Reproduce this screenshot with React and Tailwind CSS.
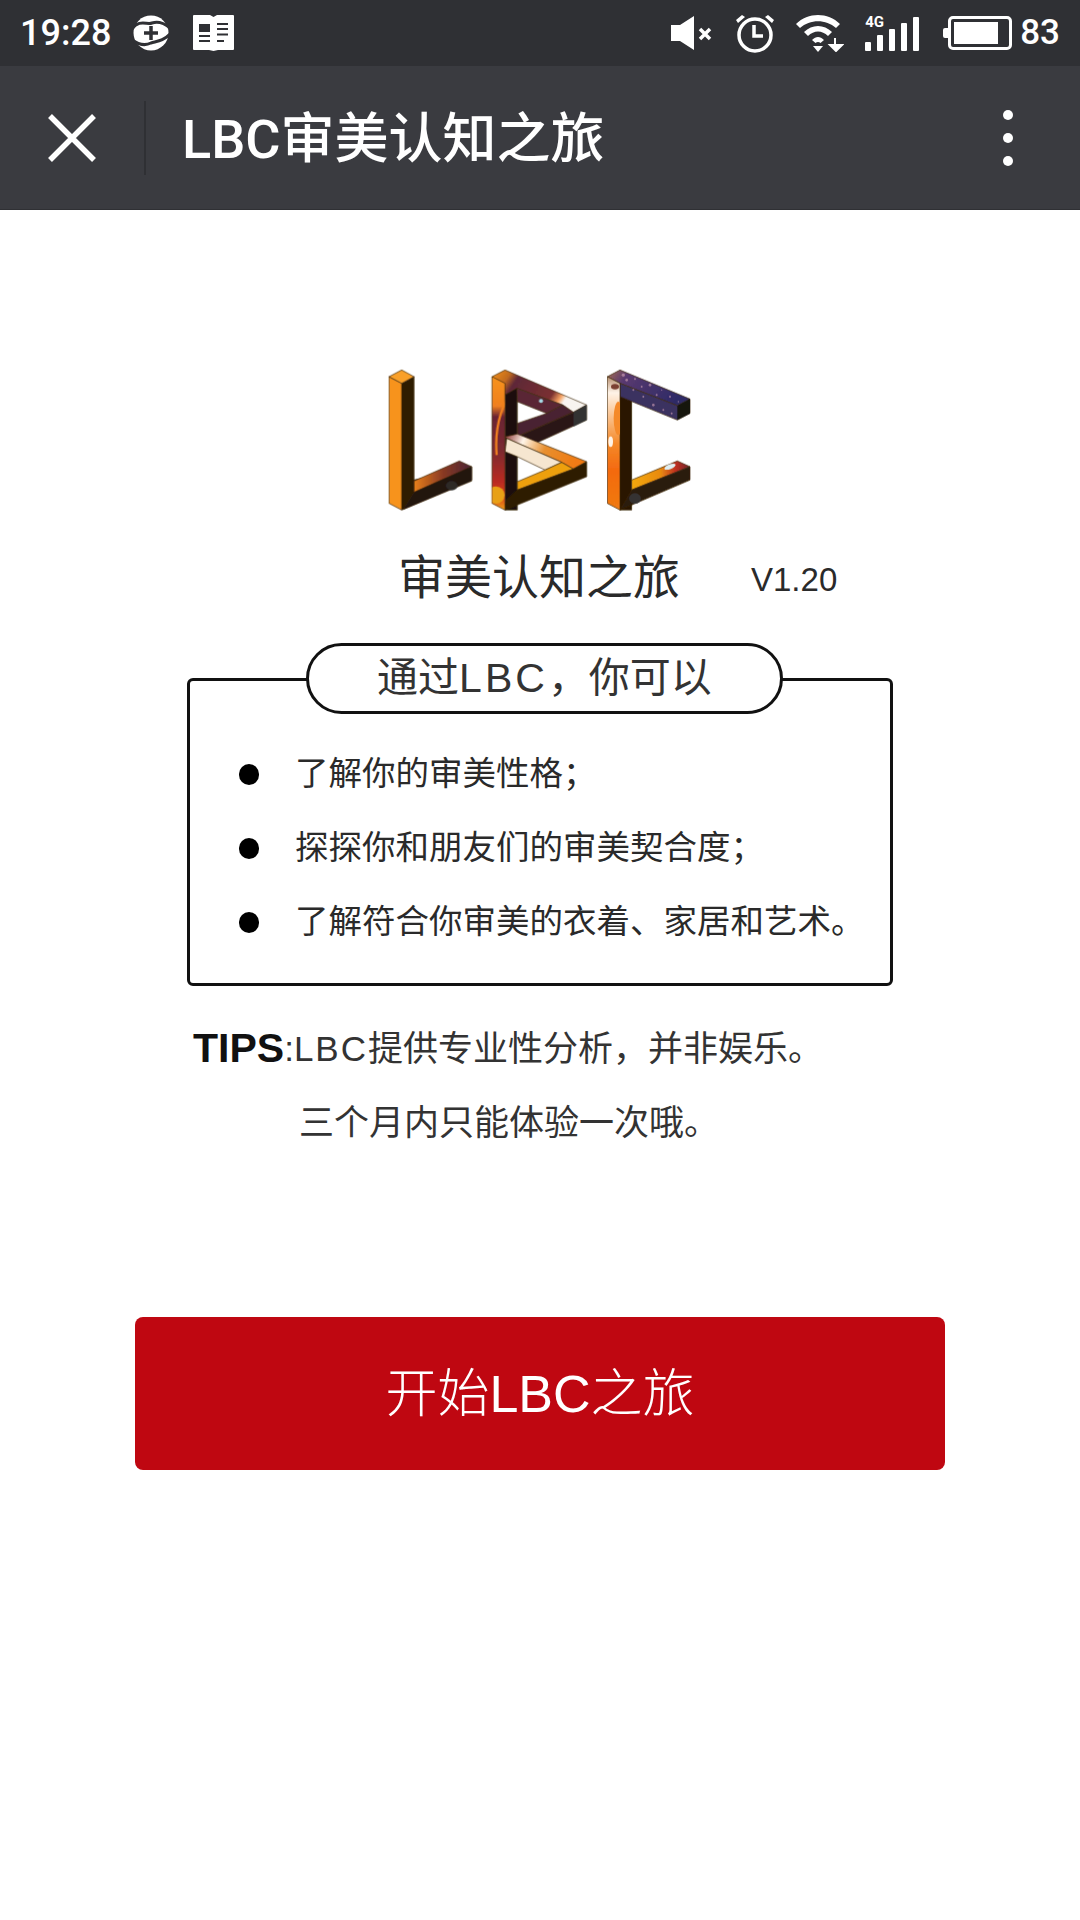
const cjk = { fontFamily: '"Liberation Sans", "Noto Sans CJK SC", sans-serif' }
const roboto = { fontFamily: 'Roboto, "Noto Sans CJK SC", sans-serif' }

// speckles for the galaxy texture on the C arm
const stars = [
  [770, 75, 4], [795, 72, 3], [815, 95, 3], [840, 90, 4], [860, 120, 3], [875, 105, 2], [900, 125, 3],
  [820, 125, 3], [850, 150, 4], [880, 165, 3], [905, 175, 3], [925, 140, 2], [790, 105, 3], [760, 60, 5],
]

// the picture logo, drawn in 3x coordinates of its 340x170 box
function Logo() {
  const edge = { stroke: '#3b2508', strokeWidth: 2, strokeLinejoin: 'round' }
  return (
    <svg width="340" height="170" viewBox="0 0 1020 510" className="self-center">
      <defs>
        <linearGradient id="bFront" x1="0" y1="0" x2="0" y2="1">
          <stop offset="0" stopColor="#f7931e" />
          <stop offset="0.22" stopColor="#f08020" />
          <stop offset="0.3" stopColor="#6a2433" />
          <stop offset="0.55" stopColor="#7a2a30" />
          <stop offset="0.78" stopColor="#b82a22" />
          <stop offset="0.9" stopColor="#d8401a" />
          <stop offset="1" stopColor="#f0a018" />
        </linearGradient>
        <linearGradient id="cFront" x1="0" y1="0" x2="0" y2="1">
          <stop offset="0" stopColor="#b89070" />
          <stop offset="0.12" stopColor="#fff4e8" />
          <stop offset="0.5" stopColor="#f58a2a" />
          <stop offset="0.7" stopColor="#f46a10" />
          <stop offset="1" stopColor="#f07a12" />
        </linearGradient>
        <linearGradient id="bTop" x1="0" y1="0" x2="1" y2="0.3">
          <stop offset="0" stopColor="#f7931e" />
          <stop offset="0.2" stopColor="#c06a20" />
          <stop offset="0.3" stopColor="#5e2838" />
          <stop offset="0.74" stopColor="#7a3030" />
          <stop offset="0.84" stopColor="#f4a060" />
          <stop offset="0.9" stopColor="#f8f4f0" />
          <stop offset="1" stopColor="#f8f4f0" />
        </linearGradient>
        <linearGradient id="cTop" x1="0" y1="0" x2="1" y2="0.3">
          <stop offset="0" stopColor="#a87050" />
          <stop offset="0.25" stopColor="#5a3a70" />
          <stop offset="1" stopColor="#2e2a66" />
        </linearGradient>
        <linearGradient id="lFoot" x1="0" y1="0" x2="1" y2="0">
          <stop offset="0" stopColor="#e8801c" />
          <stop offset="0.5" stopColor="#8a3a22" />
          <stop offset="1" stopColor="#4a2436" />
        </linearGradient>
        <linearGradient id="bLower" x1="0" y1="0" x2="1" y2="0.2">
          <stop offset="0" stopColor="#8a3030" />
          <stop offset="0.25" stopColor="#fff6ea" />
          <stop offset="0.55" stopColor="#e89030" />
          <stop offset="1" stopColor="#f07a12" />
        </linearGradient>
        <linearGradient id="cFoot" x1="0" y1="0" x2="1" y2="0">
          <stop offset="0" stopColor="#f4a810" />
          <stop offset="0.5" stopColor="#e88a10" />
          <stop offset="0.75" stopColor="#c03020" />
          <stop offset="1" stopColor="#70242c" />
        </linearGradient>
        <clipPath id="bColClip"><polygon points="366,65 405,85 405,465 366,445" /></clipPath>
        <clipPath id="cColClip"><polygon points="712,65 750,85 750,465 712,445" /></clipPath>
        <filter id="soft"><feGaussianBlur stdDeviation="1.3" /></filter>
      </defs>
      <g filter="url(#soft)">
        {/* L */}
        <polygon points="95,85 132,65 132,375 305,335 305,375 95,465" fill="#2e1a06" {...edge} />
        <polygon points="132,378 268,318 305,335 132,412" fill="url(#lFoot)" {...edge} />
        <polygon points="132,412 305,335 305,378 100,463" fill="#20120e" {...edge} />
        <ellipse cx="245" cy="392" rx="18" ry="14" fill="#2e2a28" />
        <polygon points="57,65 95,85 95,465 57,445" fill="#f7931e" {...edge} />
        <polygon points="57,65 95,45 132,65 95,85" fill="#f9a02a" {...edge} />

        {/* B */}
        <polygon points="405,85 442,95 442,465 405,465" fill="#1c1008" {...edge} />
        <polygon points="366,65 405,45 650,150 610,172 578,150 440,100 405,120" fill="url(#bTop)" {...edge} />
        <polygon points="440,100 578,150 530,175 442,140" fill="#5a2836" {...edge} />
        <circle cx="513" cy="138" r="6" fill="#a8dce8" />
        <polygon points="530,175 578,150 610,172 442,245 442,205" fill="#4a2030" {...edge} />
        <polygon points="442,245 610,172 650,150 650,195 442,290" fill="#2a1416" {...edge} />
        <polygon points="610,172 650,150 650,195 610,215" fill="#333" />
        <polygon points="405,245 442,237 650,320 610,342 575,322 410,250" fill="url(#bLower)" {...edge} />
        <polygon points="410,250 575,322 525,345 442,305 405,290" fill="#f6e6d0" {...edge} />
        <polygon points="442,380 525,345 575,322 610,342 442,405" fill="#eea010" {...edge} />
        <polygon points="442,405 610,342 650,320 650,365 405,465 405,440" fill="#2e1c04" {...edge} />
        <polygon points="366,65 405,85 405,465 366,445" fill="url(#bFront)" {...edge} />
        <g clipPath="url(#bColClip)">
          <path d="M440 95 C400 130 372 210 380 300" fill="none" stroke="#f08020" strokeWidth="7" />
          <circle cx="378" cy="420" r="26" fill="#e8a018" />
        </g>

        {/* C */}
        <polygon points="750,125 785,125 785,465 750,465" fill="#2a1606" {...edge} />
        <polygon points="712,65 750,45 960,132 922,152 750,85" fill="url(#cTop)" {...edge} />
        <polygon points="750,85 922,152 960,132 960,175 922,195 750,125" fill="#3a3060" {...edge} />
        {stars.map(([x, y, r]) => (
          <circle key={`${x}-${y}`} cx={x} cy={y} r={r} fill="#c89ab0" opacity="0.7" />
        ))}
        <polygon points="922,152 960,132 960,175 922,195" fill="#141210" />
        <polygon points="785,375 922,318 960,335 785,405" fill="url(#cFoot)" {...edge} />
        <polygon points="785,405 960,335 960,375 750,465" fill="#2c1a08" {...edge} />
        <ellipse cx="795" cy="430" rx="18" ry="16" fill="#343232" />
        <polygon points="712,65 750,85 750,465 712,445" fill="url(#cFront)" {...edge} />
        <g clipPath="url(#cColClip)">
          <ellipse cx="745" cy="190" rx="14" ry="50" fill="#f58a2a" />
          <ellipse cx="722" cy="260" rx="7" ry="16" fill="#fff4e8" />
          <ellipse cx="735" cy="95" rx="12" ry="8" fill="#7a4030" />
        </g>
        <ellipse cx="900" cy="335" rx="18" ry="7" fill="#dff0f4" transform="rotate(-22 900 335)" />
      </g>
    </svg>
  )
}

function HelpIcon() {
  return (
    <svg width="36" height="38" viewBox="0 0 36 38">
      <circle cx="18" cy="19" r="17.5" fill="#fff" />
      <path d="M-1 15 C6 5 14 11 19 9 C25 7 30 8 37 14" fill="none" stroke="#2f3034" strokeWidth="3" />
      <path d="M-1 26 C6 31 12 32 18 29 C25 27 30 27 37 20" fill="none" stroke="#2f3034" strokeWidth="3" />
      <path d="M18 12 V26 M11 19 H25" stroke="#2f3034" strokeWidth="3.5" />
    </svg>
  )
}

function BookIcon() {
  return (
    <svg width="41" height="36" viewBox="0 0 41 36">
      <path d="M1 0 H17 L20.5 2 L24 0 H40 Q41 0 41 1 V34 Q41 35 40 35 H25 L20.5 36 L16 35 H1 Q0 35 0 34 V1 Q0 0 1 0 Z" fill="#fff" />
      <rect x="6" y="9" width="11" height="8" fill="#2f3034" />
      <path d="M6 21 H17 M6 26 H17 M24 9 H35 M24 14 H35 M24 19.500 H35 M24 26 H31" stroke="#2f3034" strokeWidth="2.200" />
    </svg>
  )
}

function MuteIcon() {
  return (
    <svg width="41" height="34" viewBox="0 0 41 34">
      <path d="M0 9 H9 L23 0 V34 L9 25 H0 Z" fill="#fff" />
      <path d="M29 13 L39 23 M39 13 L29 23" stroke="#fff" strokeWidth="3.500" />
    </svg>
  )
}

function AlarmIcon() {
  return (
    <svg width="40" height="39" viewBox="0 0 40 39">
      <circle cx="20" cy="21" r="16" fill="none" stroke="#fff" strokeWidth="3.500" />
      <path d="M19 11 V22 H28" fill="none" stroke="#fff" strokeWidth="3.500" />
      <path d="M1 6 L7 1 L10 3 L3 9 Z M39 6 L33 1 L30 3 L37 9 Z" fill="#fff" />
    </svg>
  )
}

function WifiIcon() {
  return (
    <svg width="48" height="38" viewBox="0 0 48 38">
      <path d="M0 10 C12 -2 32 -2 44 10 L40 14 C30 5 14 5 4 14 Z" fill="#fff" />
      <path d="M8 18 C16 10 28 10 36 18 L32 22 C26 16 18 16 12 22 Z" fill="#fff" />
      <path d="M16 26 C20 22 24 22 28 26 L24.500 29 C23 27.500 21 27.500 19.500 29 Z" fill="#fff" />
      <path d="M17 32 H27 L22 38 Z" fill="#fff" />
      <path d="M39 24 V31 M34 31 H46 L40 37 Z" fill="#fff" stroke="#fff" strokeWidth="2" />
    </svg>
  )
}

function SignalIcon() {
  return (
    <div className="relative w-[54px] h-[35px]">
      <div className="absolute left-0 -top-[1px] text-white text-[15px] leading-[15px] font-bold" style={roboto}>4G</div>
      <div className="absolute inset-0 flex items-end gap-[6px]">
        <div className="w-[6px] h-[9px] bg-white rounded-[1px]" />
        <div className="w-[6px] h-[16px] bg-white rounded-[1px]" />
        <div className="w-[6px] h-[22px] bg-white rounded-[1px]" />
        <div className="w-[6px] h-[28px] bg-white rounded-[1px]" />
        <div className="w-[6px] h-[34px] bg-white rounded-[1px]" />
      </div>
    </div>
  )
}

function Battery() {
  return (
    <div className="flex items-center">
      <div className="w-[5px] h-[10px] bg-white rounded-l-[2px]" />
      <div className="w-[64px] h-[34px] border-[3px] border-white rounded-[5px] p-[3px] pr-[2px]">
        <div className="w-[44px] h-full bg-white" />
      </div>
    </div>
  )
}

function Bullet({ children }) {
  return (
    <li className="h-[74px] flex items-center pl-[49px] gap-[36px]">
      <span className="w-[20px] h-[21px] rounded-full bg-black shrink-0" />
      <span className="text-[33.5px] leading-none text-[#2a2a2a] whitespace-nowrap">{children}</span>
    </li>
  )
}

export default function App() {
  return (
    <div className="min-h-[1920px] bg-white flex flex-col" style={cjk}>
      {/* status bar */}
      <div className="h-[66px] bg-[#2f3034] flex items-center justify-between pl-[20px] pr-[20px] text-white">
        <div className="flex items-center">
          <span className="text-[36px] font-medium" style={roboto}>19:28</span>
          <span className="ml-[22px]"><HelpIcon /></span>
          <span className="ml-[24px]"><BookIcon /></span>
        </div>
        <div className="flex items-center">
          <MuteIcon />
          <span className="ml-[23px]"><AlarmIcon /></span>
          <span className="ml-[21px]"><WifiIcon /></span>
          <span className="ml-[21px]"><SignalIcon /></span>
          <span className="ml-[24px]"><Battery /></span>
          <span className="ml-[8px] text-[35px] font-medium" style={roboto}>83</span>
        </div>
      </div>

      {/* nav bar */}
      <div className="h-[144px] bg-[#3a3b40] border-b border-[#2f3034] flex items-center text-white">
        <svg width="48" height="48" viewBox="0 0 48 48" className="ml-[48px]">
          <path d="M2 2 L46 46 M46 2 L2 46" stroke="#fff" strokeWidth="5.500" />
        </svg>
        <div className="w-[2px] h-[74px] bg-[#2f3034] ml-[48px]" />
        <div className="ml-[36px] mt-[5px] text-[54px] leading-none font-medium" style={roboto}>LBC审美认知之旅</div>
        <div className="ml-auto mr-[67px] flex flex-col gap-[13px]">
          <div className="w-[10px] h-[10px] rounded-full bg-white" />
          <div className="w-[10px] h-[10px] rounded-full bg-white" />
          <div className="w-[10px] h-[10px] rounded-full bg-white" />
        </div>
      </div>

      {/* content */}
      <div className="flex flex-col">
        <div className="mt-[145px] flex flex-col"><Logo /></div>

        <div className="mt-[22px] h-[60px] pl-[398px] flex items-center text-[#2a2a2a] whitespace-nowrap">
          <span className="text-[47px] leading-none">审美认知之旅</span>
          <span className="ml-[71px] text-[33px] leading-none mt-[4px]">V1.20</span>
        </div>

        <div className="relative mt-[36px] mx-[187px] pt-[35px]">
          <div className="absolute left-[119px] top-0 w-[477px] h-[71px] border-[3px] border-[#111] rounded-full bg-white flex items-center justify-center text-[41px] text-[#333] leading-none whitespace-nowrap">
            通过<span className="tracking-[3px]">LBC</span>，你可以
          </div>
          <ul className="h-[308px] border-[3px] border-[#111] rounded-[6px] pt-[56px]">
            <Bullet>了解你的审美性格；</Bullet>
            <Bullet>探探你和朋友们的审美契合度；</Bullet>
            <Bullet>了解符合你审美的衣着、家居和艺术。</Bullet>
          </ul>
        </div>

        <div className="mt-[25px] h-[74px] pl-[193px] flex items-center whitespace-nowrap leading-none">
          <span className="text-[41px] font-bold text-[#111]">TIPS</span>
          <span className="text-[35px] text-[#333]">:<span className="tracking-[2px]">LBC</span>提供专业性分析，并非娱乐。</span>
        </div>
        <div className="h-[74px] pl-[299px] flex items-center whitespace-nowrap leading-none text-[35px] text-[#333]">
          三个月内只能体验一次哦。
        </div>

        <button className="mt-[158px] mx-[135px] h-[153px] rounded-[8px] bg-[#bf0711] text-white text-[52px] font-light leading-none">
          开始LBC之旅
        </button>
      </div>
    </div>
  )
}
